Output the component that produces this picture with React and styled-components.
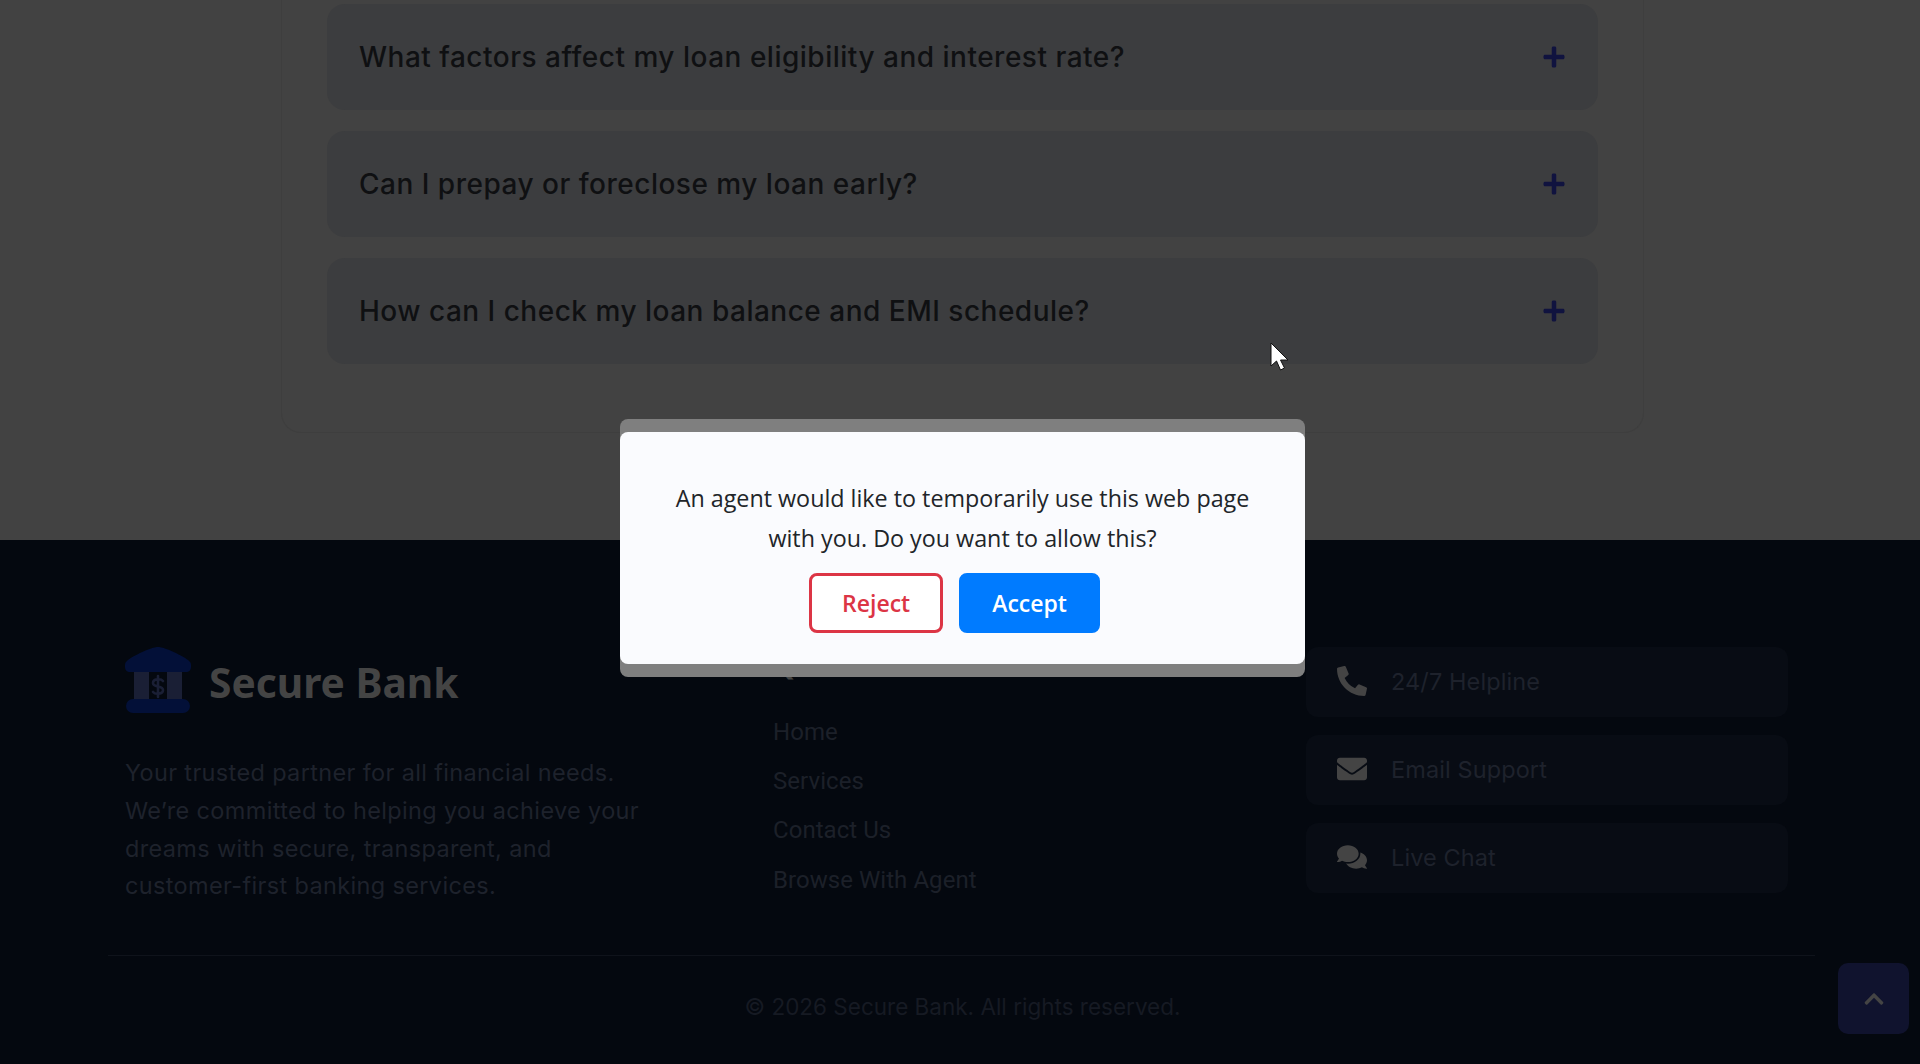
import React from 'react'
import styled, { createGlobalStyle } from 'styled-components'
import { FaPlus, FaPhoneAlt, FaEnvelope, FaComments, FaChevronUp } from 'react-icons/fa'

const GlobalStyle = createGlobalStyle`
html, body {
  margin: 0;
  padding: 0;
  height: 1064px;
  overflow: hidden;
  background: #424242;
}
* { box-sizing: border-box; }
`

const Page = styled.div`
  position: relative;
  width: 1920px;
  height: 1064px;
  overflow: hidden;
  font-family: Inter, "Liberation Sans", sans-serif;
`

const FaqSection = styled.section`
  height: 540px;
  padding: 0 276px 0 281px;
  background: #424242;
`

const FaqCard = styled.div`
  display: flex;
  flex-direction: column;
  gap: 21.5px;
  padding: 4px 45px 68px;
  border: 1px solid #3e3e3e;
  border-top: none;
  border-radius: 0 0 20px 20px;
`

const FaqItem = styled.div`
  display: flex;
  align-items: center;
  justify-content: space-between;
  height: 105.67px;
  padding: 0 32px;
  background: #3c3d3f;
  border-radius: 18px;
  color: #0f1012;
  font-size: 28px;
  font-weight: 500;
  letter-spacing: 0.5px;
  svg {
    width: 24px;
    height: 24px;
    color: #10133f;
  }
`

const Footer = styled.footer`
  height: 524px;
  padding: 107px 132px 0 125px;
  background: #04080f;
`

const FooterGrid = styled.div`
  display: grid;
  grid-template-columns: 648px 533px 482px;
  height: 308px;
`

const Brand = styled.div`
  display: flex;
  align-items: center;
  gap: 18px;
  height: 66px;
`

const BrandName = styled.div`
  padding-top: 3px;
  font-family: "Noto Sans", sans-serif;
  font-size: 40.7px;
  font-weight: 700;
  color: #444444;
`

const About = styled.p`
  width: 540px;
  margin: 41px 0 0;
  font-size: 23.5px;
  line-height: 37.8px;
  letter-spacing: 0.35px;
  color: #1e222c;
`

const LinksTitle = styled.h3`
  margin: -2px 0 25px;
  font-family: "Noto Sans", sans-serif;
  font-size: 28px;
  font-weight: 700;
  line-height: 38px;
  color: #444444;
`

const LinkRow = styled.div`
  height: 49.2px;
  line-height: 49.2px;
  font-family: Roboto, sans-serif;
  font-size: 24px;
  letter-spacing: 0.05px;
  color: #1c2029;
`

const ContactStack = styled.div`
  display: flex;
  flex-direction: column;
  gap: 18px;
`

const ContactCard = styled.div`
  display: flex;
  align-items: center;
  gap: 24px;
  height: 70px;
  padding: 0 31px 2px;
  background: #080c14;
  border-radius: 12px;
  font-size: 23.5px;
  letter-spacing: 0.1px;
  color: #1e222c;
  svg {
    width: 30px;
    height: 30px;
    color: #444444;
  }
`

const Divider = styled.div`
  width: 1707px;
  margin-left: -17px;
  border-top: 1px solid #0f131b;
`

const Copyright = styled.div`
  margin-top: 36px;
  padding-left: 5px;
  margin-left: -125px;
  width: 1920px;
  text-align: center;
  font-size: 22.5px;
  line-height: 30px;
  color: #161a23;
`

const ScrollTop = styled.div`
  position: absolute;
  left: 1838px;
  top: 963px;
  display: flex;
  align-items: center;
  justify-content: center;
  width: 71px;
  height: 71px;
  border-radius: 10px;
  background: #10132e;
  color: #444444;
  svg {
    width: 22px;
    height: 22px;
  }
`

const Overlay = styled.div`
  position: absolute;
  inset: 0;
  display: flex;
  justify-content: center;
  align-items: flex-start;
  padding: 419px 0 0 5px;
`

const Dialog = styled.div`
  width: 685px;
  padding: 12.5px 0;
  background: #7f7f7f;
  border-radius: 8px;
`

const DialogPanel = styled.div`
  height: 232.5px;
  padding: 46.5px 40px 0;
  background: #fafbfe;
  border-radius: 8px;
  text-align: center;
  font-family: "Open Sans", sans-serif;
`

const DialogText = styled.p`
  margin: 0;
  font-size: 23.3px;
  line-height: 40px;
  color: #212529;
`

const DialogActions = styled.div`
  display: flex;
  justify-content: center;
  margin-top: 15px;
`

const DialogButton = styled.div`
  display: flex;
  align-items: center;
  height: 60px;
  margin-right: 16px;
  padding: 0 30px;
  border: 3px solid ${p => (p.$primary ? '#007bff' : '#dc3545')};
  border-radius: 8px;
  background: ${p => (p.$primary ? '#007bff' : '#ffffff')};
  color: ${p => (p.$primary ? '#ffffff' : '#dc3545')};
  font-size: 23px;
  font-weight: 600;
`

const Cursor = styled.svg`
  position: absolute;
  left: 1270px;
  top: 342px;
  width: 20px;
  height: 29px;
`

const faqs = [
  'What factors affect my loan eligibility and interest rate?',
  'Can I prepay or foreclose my loan early?',
  'How can I check my loan balance and EMI schedule?',
]

const links = ['Home', 'Services', 'Contact Us', 'Browse With Agent']

const contacts = [
  { label: '24/7 Helpline', icon: <FaPhoneAlt /> },
  { label: 'Email Support', icon: <FaEnvelope /> },
  { label: 'Live Chat', icon: <FaComments /> },
]

function BankLogo() {
  return (
    <svg width="66" height="66" viewBox="0 0 66 66">
      <path d="M33 0 C40 0 58 9 63 13 C65 14.5 66 16 66 18 V20 C66 23 64 25 61 25 H5 C2 25 0 23 0 20 V18 C0 16 1 14.5 3 13 C8 9 26 0 33 0 Z" fill="#031038" />
      <rect x="9" y="25" width="15" height="27" fill="#1a1f35" />
      <rect x="42" y="25" width="15" height="27" fill="#1a1f35" />
      <path d="M38 34 C36 31.5 28 31.5 28 36 C28 41 38 38 38 43 C38 47.5 30 47.5 28 45 M33 29 V50" fill="none" stroke="#1a1f35" strokeWidth="2.6" strokeLinecap="round" />
      <rect x="1" y="52" width="64" height="14" rx="7" fill="#031038" />
    </svg>
  )
}

export default function App() {
  return (
    <Page>
      <GlobalStyle />
      <FaqSection>
        <FaqCard>
          {faqs.map(q => (
            <FaqItem key={q}>
              {q}
              <FaPlus />
            </FaqItem>
          ))}
        </FaqCard>
      </FaqSection>

      <Footer>
        <FooterGrid>
          <div>
            <Brand>
              <BankLogo />
              <BrandName>Secure Bank</BrandName>
            </Brand>
            <About>
              Your trusted partner for all financial needs.<br />
              We’re committed to helping you achieve your<br />
              dreams with secure, transparent, and<br />
              customer-first banking services.
            </About>
          </div>
          <div>
            <LinksTitle>Quick Links</LinksTitle>
            {links.map(l => <LinkRow key={l}>{l}</LinkRow>)}
          </div>
          <ContactStack>
            {contacts.map(c => (
              <ContactCard key={c.label}>
                {c.icon}
                {c.label}
              </ContactCard>
            ))}
          </ContactStack>
        </FooterGrid>
        <Divider />
        <Copyright>© 2026 Secure Bank. All rights reserved.</Copyright>
      </Footer>

      <ScrollTop><FaChevronUp /></ScrollTop>

      <Overlay>
        <Dialog>
          <DialogPanel>
            <DialogText>
              An agent would like to temporarily use this web page<br />
              with you. Do you want to allow this?
            </DialogText>
            <DialogActions>
              <DialogButton>Reject</DialogButton>
              <DialogButton $primary>Accept</DialogButton>
            </DialogActions>
          </DialogPanel>
        </Dialog>
      </Overlay>

      <Cursor viewBox="0 0 20 29">
        <path d="M1 1 V24 L6.5 19 L10.5 28 L14.5 26 L10.5 18 H18 Z" fill="#ffffff" stroke="#111111" strokeWidth="1" />
      </Cursor>
    </Page>
  )
}
